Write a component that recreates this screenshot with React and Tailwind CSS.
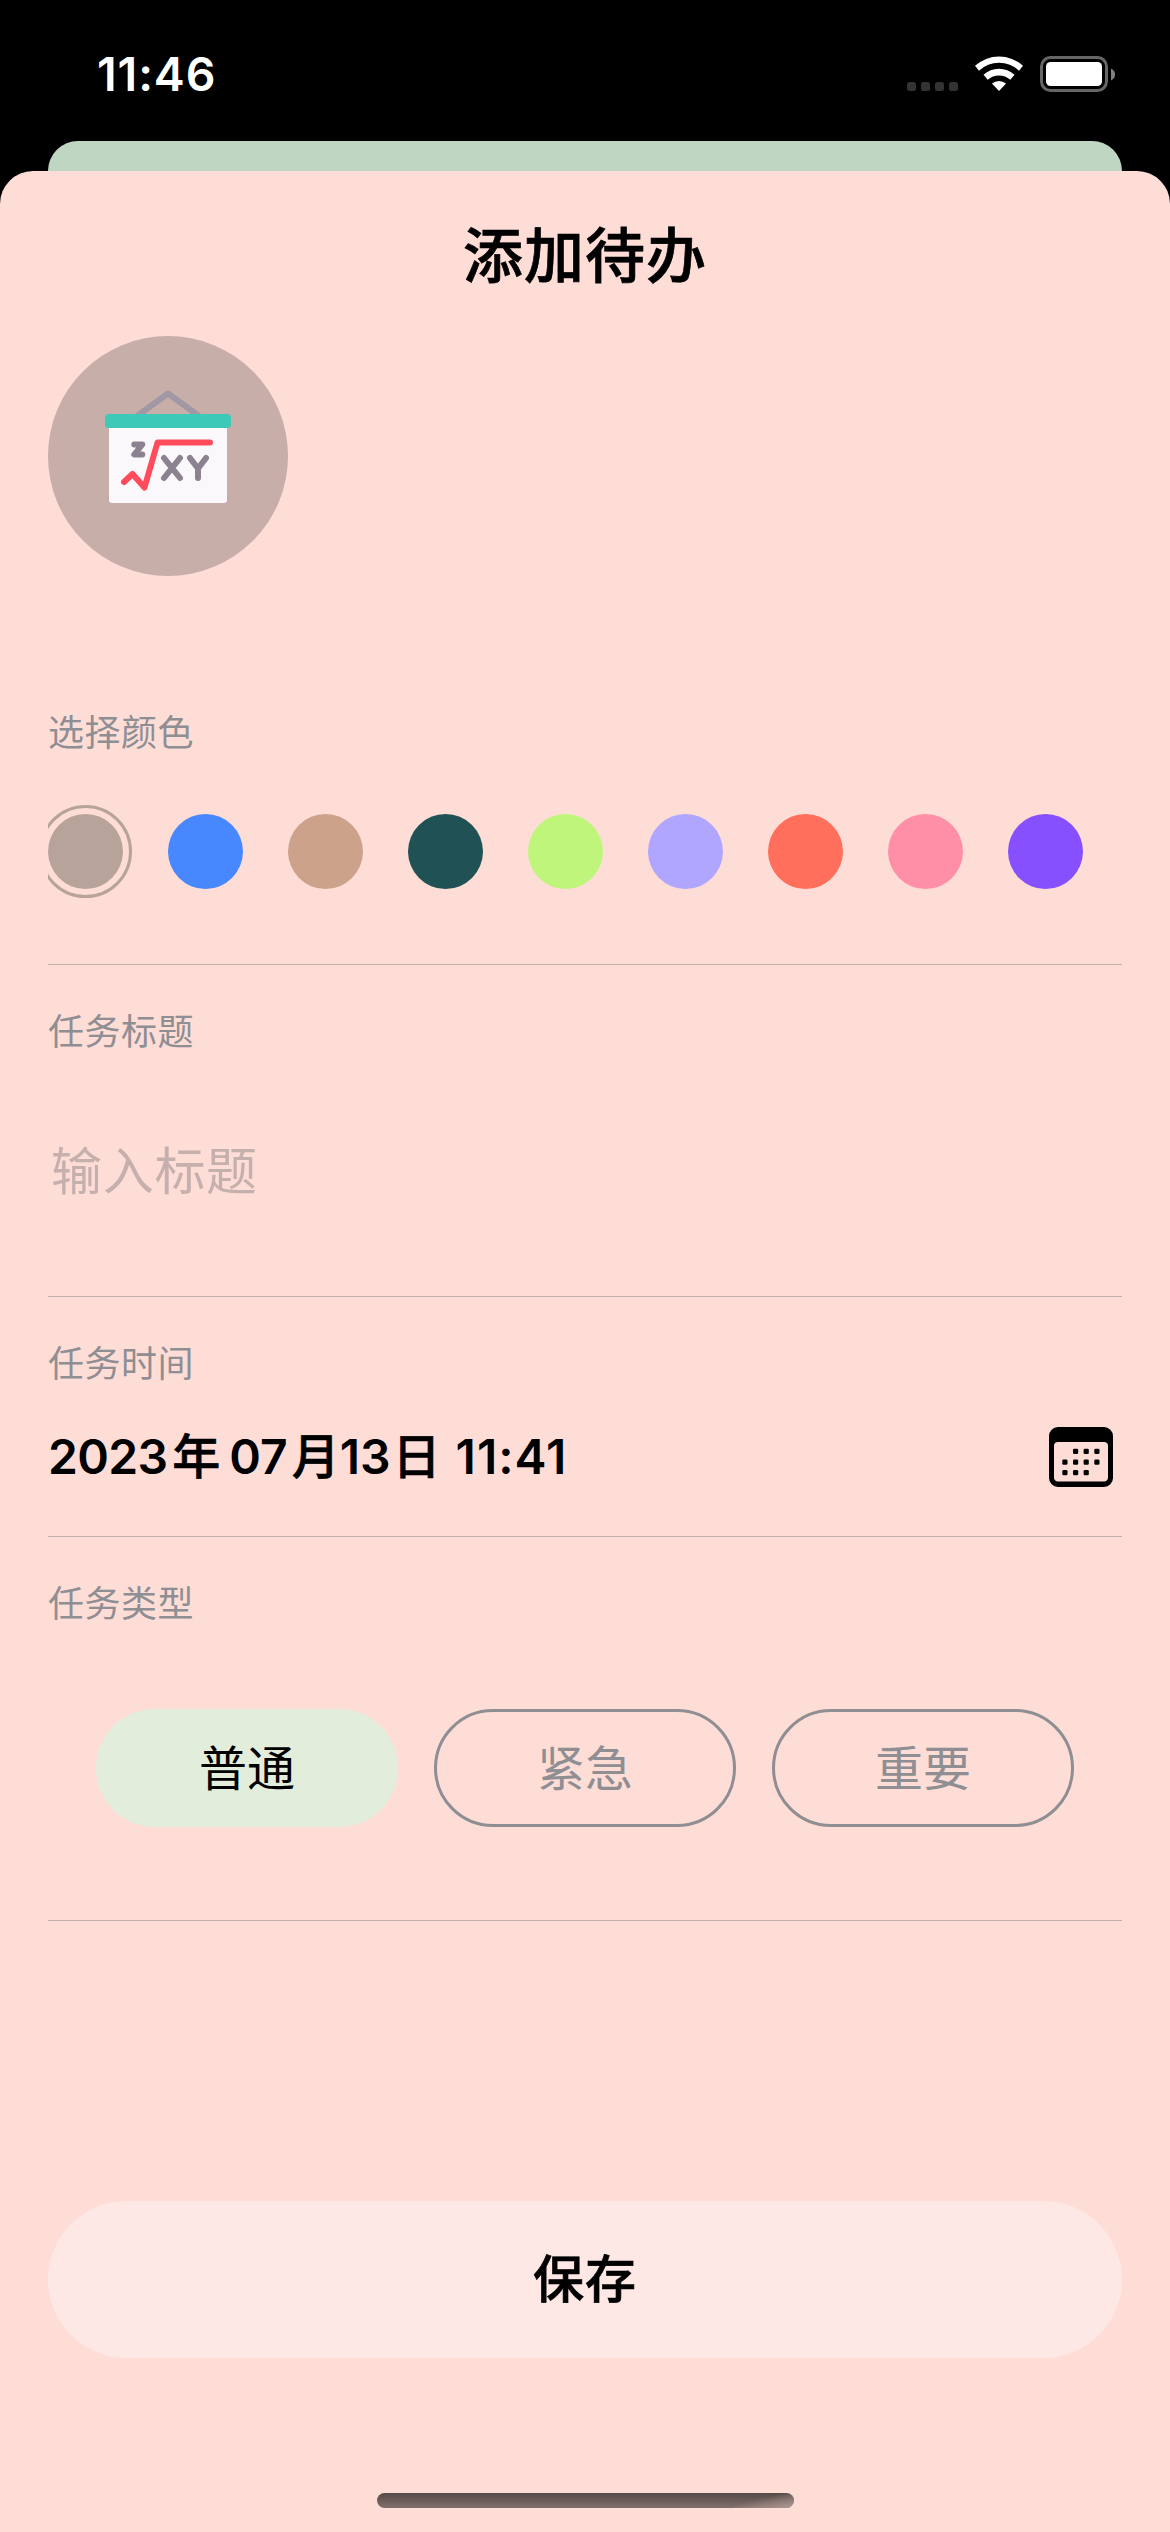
const COLORS = [
  'bg-[#b8a39b]',
  'bg-[#4787ff]',
  'bg-[#cca38a]',
  'bg-[#205154]',
  'bg-[#c0f57c]',
  'bg-[#b0a5ff]',
  'bg-[#ff6f5c]',
  'bg-[#ff8fa7]',
  'bg-[#8650ff]',
];

function StatusBar() {
  return (
    <div className="flex h-[141px] items-start justify-between bg-black text-white">
      <div className="ml-[97px] mt-[44px] h-[60px] font-['Inter'] text-[46.5px] font-semibold leading-[60px] tracking-[0.9px]">11:46</div>
      <svg className="mt-[50px] mr-[50px]" width="214" height="50" viewBox="906 50 214 50">
        <g fill="#333">
          <rect x="907" y="82" width="9" height="9" rx="2.5" />
          <rect x="921" y="82" width="9" height="9" rx="2.5" />
          <rect x="935" y="82" width="9" height="9" rx="2.5" />
          <rect x="949" y="82" width="9" height="9" rx="2.5" />
        </g>
        <g fill="#fff">
          <path d="M975 65.8A35.5 35.5 0 0 1 1023 65.8L1019 70.7A29 29 0 0 0 979 70.7Z" />
          <path d="M983.5 74.8A23 23 0 0 1 1014.5 74.8L1010.3 79.7A17 17 0 0 0 987.7 79.7Z" />
          <path d="M992 83.6A10.5 10.5 0 0 1 1006 83.6L999 91Z" />
        </g>
        <rect x="1041.5" y="57.5" width="65" height="33" rx="9" fill="none" stroke="#666" strokeWidth="3" />
        <rect x="1046" y="62" width="56" height="24" rx="4.5" fill="#fff" />
        <path d="M1111 68.5C1116.5 71 1116.5 78 1111 80.5Z" fill="#808080" />
      </svg>
    </div>
  );
}

function BoardIcon() {
  return (
    <svg width="126" height="116" viewBox="105 388 126 116" className="mb-[20px]">
      <path d="M137 416L168 393.5L199 416" fill="none" stroke="#a198a5" strokeWidth="6" strokeLinejoin="round" />
      <rect x="109" y="424" width="118" height="79" rx="3" fill="#faf8fa" />
      <rect x="105" y="414" width="126" height="14" rx="3.5" fill="#3dc9b7" />
      <path d="M124 482L132.5 474L144.5 487.5L157.5 442.5H210" fill="none" stroke="#ff4b5b" strokeWidth="6" strokeLinecap="round" strokeLinejoin="round" />
      <g fill="none" stroke="#8c8190" strokeWidth="6" strokeLinecap="round" strokeLinejoin="round">
        <path d="M134.3 444.5H142.3L134.3 454.5H142.3" />
        <path d="M164 458L180 478M180 458L164 478" />
        <path d="M190 458L198 468.5V478M206 458L198 468.5" />
      </g>
    </svg>
  );
}

const CALENDAR_DOTS = [
  [24, 24.3], [34.6, 24.3], [45.3, 24.3],
  [13.3, 35], [24, 35], [34.6, 35], [45.3, 35],
  [13.3, 45.5], [24, 45.5], [34.6, 45.5],
];

function CalendarIcon() {
  return (
    <svg width="64" height="60" viewBox="0 0 64 60" className="mt-[-1px]">
      <path fillRule="evenodd" d="M9 0H55A9 9 0 0 1 64 9V51A9 9 0 0 1 55 60H9A9 9 0 0 1 0 51V9A9 9 0 0 1 9 0ZM9 15A4 4 0 0 0 5 19V50A4 4 0 0 0 9 54.5H55A4 4 0 0 0 59 50V19A4 4 0 0 0 55 15Z" />
      {CALENDAR_DOTS.map(([x, y]) => (
        <rect key={x + '-' + y} x={x} y={y - 2.5} width="5.2" height="5.2" rx="1.3" />
      ))}
    </svg>
  );
}

function Label({ children }) {
  return <div className="h-[54px] pt-px text-[36px] leading-[54px] tracking-[0.5px] text-[#8e8e93]">{children}</div>;
}

export default function App() {
  return (
    <div className="flex h-[2532px] w-[1170px] flex-col overflow-hidden bg-black font-['Inter','Noto_Sans_CJK_SC',sans-serif]">
      <StatusBar />
      <div className="mx-[48px] -mb-[30px] h-[60px] shrink-0 rounded-t-[30px] bg-[#bed6c2]" />
      <main className="flex grow flex-col rounded-t-[33px] bg-[#ffddd7] px-[48px]">
        <h1 className="mt-[40px] h-[90px] text-center text-[60px] font-medium leading-[90px] tracking-[1px] text-black [-webkit-text-stroke:0.7px_black]">添加待办</h1>
        <div className="mt-[35px] flex size-[240px] items-center justify-center rounded-full bg-[#c8aea9]">
          <BoardIcon />
        </div>

        <section className="mt-[129px] h-[260px] border-b border-[#c5b0ae]">
          <Label>选择颜色</Label>
          <div className="mt-[37px] flex h-[111px] items-center gap-[45px] overflow-hidden">
            {COLORS.map((color, i) => (
              <div key={color} className={'relative size-[75px] shrink-0 rounded-full ' + color}>
                {i === 0 && <div className="absolute -inset-[9px] rounded-full border-[3px] border-[#b8a39b]" />}
              </div>
            ))}
          </div>
        </section>

        <section className="h-[332px] border-b border-[#c5b0ae] pt-[39px]">
          <Label>任务标题</Label>
          <div className="mt-[76px] h-[76px] pl-[3px] text-[51px] leading-[76px] tracking-[0.7px] text-[#c5b0ae]">输入标题</div>
        </section>

        <section className="h-[240px] border-b border-[#c5b0ae] pt-[39px]">
          <Label>任务时间</Label>
          <div className="mt-[31px] flex h-[72px] items-center justify-between pr-[9px]">
            <div className="whitespace-pre text-[48px] font-semibold leading-[72px] text-black">
              <span className="tracking-[-0.7px]">2023</span>
              <span className="ml-[5px] mr-[9px] font-medium [-webkit-text-stroke:0.6px_black]">年</span>07
              <span className="ml-[4px] mr-[2px] font-medium [-webkit-text-stroke:0.6px_black]">月</span>
              <span className="-ml-[2px]">13</span>
              <span className="ml-[2px] mr-[2px] font-medium [-webkit-text-stroke:0.6px_black]">日</span>
              <span className="tracking-[1px]"> 11:41</span>
            </div>
            <CalendarIcon />
          </div>
        </section>

        <section className="h-[384px] border-b border-[#c5b0ae] pt-[39px]">
          <Label>任务类型</Label>
          <div className="mx-[48px] mt-[79px] grid h-[118px] grid-cols-3 gap-[36px] text-[48px]">
            <button className="rounded-[60px] bg-[#e2eddb] pt-[2px] text-black">普通</button>
            <button className="rounded-[60px] border-[3px] border-[#8e8e93] pt-[2px] text-[#8e8e93]">紧急</button>
            <button className="rounded-[60px] border-[3px] border-[#8e8e93] pt-[2px] text-[#8e8e93]">重要</button>
          </div>
        </section>

        <button className="mt-[280px] h-[157px] rounded-full bg-[#fde8e6] pt-[2px] text-[51px] font-medium tracking-[1px] text-black [-webkit-text-stroke:0.7px_black]">保存</button>
        <div className="mx-auto mt-[135px] h-[15px] w-[417px] overflow-hidden rounded-full bg-linear-to-b from-[#544a47] to-[#826f6c]">
          <div className="ml-auto h-full w-[60px] bg-linear-to-br from-transparent from-40% to-[#b09a95]" />
        </div>
      </main>
    </div>
  );
}
